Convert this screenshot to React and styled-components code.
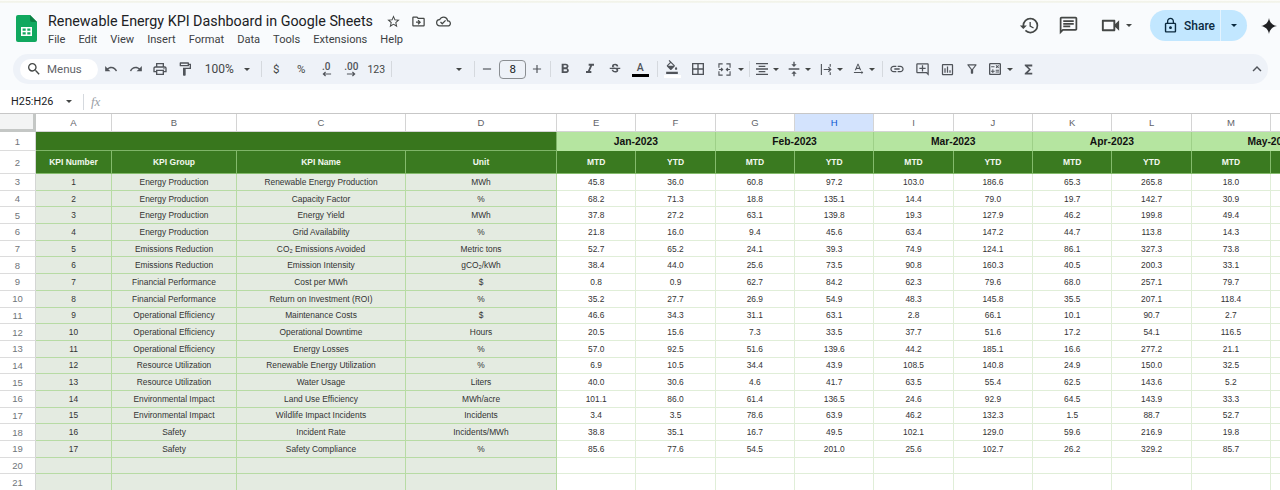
import React from "react";
import styled, { createGlobalStyle } from "styled-components";
import {
  MdStarBorder,
  MdOutlineDriveFileMove,
  MdOutlineCloudDone,
  MdUndo,
  MdRedo,
  MdOutlinePrint,
  MdOutlineFormatPaint,
  MdSearch,
  MdHistory,
  MdOutlineVideocam,
  MdLockOutline,
  MdFormatBold,
  MdFormatItalic,
  MdStrikethroughS,
  MdOutlineFormatColorFill,
  MdBorderAll,
  MdFormatAlignCenter,
  MdVerticalAlignCenter,
  MdLink,
  MdOutlineAddComment,
  MdOutlineInsertChart,
  MdOutlineFilterAlt,
  MdFunctions,
  MdKeyboardArrowUp,
  MdAdd,
  MdRemove,
  MdOutlineCalculate,
  MdOutlineTextRotationNone,
  MdOutlineChat,
} from "react-icons/md";

const GlobalStyle = createGlobalStyle`
  html, body {
    margin: 0;
    padding: 0;
    background: #fff;
    overflow: hidden;
  }
  body {
    width: 1280px;
    height: 490px;
    font-family: "Liberation Sans", Arial, sans-serif;
  }
`;

const Page = styled.div`
  width: 1280px;
  height: 490px;
  overflow: hidden;
  display: flex;
  flex-direction: column;
`;

const TopStrip = styled.div`
  height: 3px;
  background: linear-gradient(#fff 0, #f0f1e6 60%, #f6f8f4 100%);
`;

const Chrome = styled.div`
  background: #f9fbfd;
  height: 87px;
`;

const TitleBar = styled.div`
  height: 51px;
  display: flex;
  align-items: flex-start;
  padding: 0 3px 0 16px;
`;

const LogoWrap = styled.div`
  width: 21px;
  height: 27px;
  margin-top: 12px;
`;

const DocInfo = styled.div`
  margin-left: 11px;
  padding-top: 8px;
`;

const TitleRow = styled.div`
  display: flex;
  align-items: center;
  height: 20px;
`;

const Title = styled.div`
  font-family: Roboto, sans-serif;
  font-size: 14.3px;
  color: #202124;
  width: 324px;
  white-space: nowrap;
`;

const TitleIcons = styled.div`
  display: flex;
  margin-left: 8.5px;
  color: #444746;
`;

const TitleIcon = styled.div`
  width: 25px;
  display: flex;
  justify-content: center;
  align-items: center;
  font-size: 15px;
`;

const MenuRow = styled.div`
  display: flex;
  gap: 13px;
  margin-top: 0;
  font-family: Roboto, sans-serif;
  font-size: 11.1px;
  line-height: 18px;
  color: #3c4043;
`;

const HeaderRight = styled.div`
  margin-left: auto;
  display: flex;
  align-items: center;
  height: 31px;
  margin-top: 7px;
  color: #444746;
`;

const HeaderIcon = styled.div`
  width: 24px;
  display: flex;
  justify-content: center;
  font-size: ${(p) => p.$size || 21}px;
  margin-right: ${(p) => p.$gap || 0}px;
`;

const ShareButton = styled.div`
  width: 97px;
  height: 31px;
  margin-left: 17px;
  display: flex;
  border-radius: 16px;
  background: #c2e7ff;
  color: #0b2a3f;
  overflow: hidden;
`;

const ShareMain = styled.div`
  width: 71px;
  display: flex;
  align-items: center;
  gap: 5px;
  padding-left: 12px;
  box-sizing: border-box;
  border-right: 1px solid #e3f3ff;
  font-family: Roboto, sans-serif;
  font-size: 12px;
  font-weight: 500;
  svg {
    font-size: 17px;
  }
`;

const ShareCaret = styled.div`
  flex: 1;
  display: flex;
  align-items: center;
  justify-content: center;
`;

const GeminiWrap = styled.div`
  width: 16px;
  height: 16px;
  margin-left: 14px;
  color: #202124;
`;

const Caret = styled.span`
  display: block;
  width: 0;
  height: 0;
  border-left: 3.5px solid transparent;
  border-right: 3.5px solid transparent;
  border-top: 3.5px solid ${(p) => p.$color || "#444746"};
`;

const Toolbar = styled.div`
  margin-left: 13px;
  width: 1255px;
  height: 30px;
  box-sizing: border-box;
  padding: 0 1px 0 7px;
  display: flex;
  align-items: center;
  border-radius: 15px;
  background: #eef2f8;
  color: #50545a;
`;

const SearchPill = styled.div`
  width: 78px;
  height: 21px;
  flex: none;
  margin-right: 0.7px;
  box-sizing: border-box;
  padding-left: 6px;
  display: flex;
  align-items: center;
  gap: 5px;
  background: #fff;
  border-radius: 11px;
  font-family: Roboto, sans-serif;
  font-size: 11.5px;
  color: #5f6368;
  svg {
    font-size: 16px;
    color: #444746;
  }
`;

const Slot = styled.div`
  flex: none;
  width: ${(p) => p.$w}px;
  margin-left: ${(p) => p.$l || 0}px;
  height: 30px;
  display: flex;
  flex-direction: column;
  align-items: center;
  justify-content: center;
  font-size: ${(p) => p.$size || 14}px;
`;

const SlotText = styled(Slot)`
  font-family: Roboto, sans-serif;
  font-size: ${(p) => p.$font || 11.5}px;
  color: #444746;
`;

const Divider = styled.div`
  flex: none;
  width: 1px;
  height: 16px;
  background: #d5d9de;
  margin-left: ${(p) => p.$l || 0}px;
  margin-right: ${(p) => p.$r || 0}px;
`;

const Spacer = styled.div`
  flex: none;
  width: ${(p) => p.$w}px;
`;

const FontSizeBox = styled.div`
  flex: none;
  width: 27px;
  height: 19px;
  box-sizing: border-box;
  border: 1px solid #8a8e92;
  border-radius: 4px;
  display: flex;
  align-items: center;
  justify-content: center;
  font-family: Roboto, sans-serif;
  font-size: 11.5px;
  color: #202124;
`;

const ColorLetter = styled.span`
  font-family: Roboto, sans-serif;
  font-size: 10.5px;
  font-weight: 500;
  line-height: 11px;
`;

const ColorBar = styled.span`
  display: block;
  width: 17px;
  height: 3px;
  margin-top: 1px;
  background: ${(p) => p.$color};
`;

const DecimalLabel = styled.span`
  font-family: Roboto, sans-serif;
  font-size: 10px;
  font-weight: 500;
  line-height: 9px;
`;

const FormulaBar = styled.div`
  height: 23px;
  display: flex;
  align-items: center;
  background: #fff;
  border-bottom: 1px solid #c7c7c7;
  color: #444746;
`;

const NameBox = styled.div`
  width: 55px;
  margin-left: 11px;
  font-family: Roboto, sans-serif;
  font-size: 10.8px;
  color: #202124;
`;

const NameCaret = styled.div`
  width: 8px;
`;

const FxLabel = styled.div`
  margin-left: 7px;
  font-family: "Liberation Serif", serif;
  font-style: italic;
  font-size: 13px;
  color: #9aa0a6;
`;

const SheetGrid = styled.div`
  flex: 1;
  display: grid;
  grid-template-columns: 36px 76px 125px 169px 151px repeat(10, 79.35px);
  grid-template-rows: 18px 19px 23px repeat(19, 16.7px);
  overflow: hidden;
  background: #fff;
  font-size: 8.4px;
  color: #333;
`;

const Cell = styled.div`
  box-sizing: border-box;
  display: flex;
  align-items: center;
  justify-content: center;
  white-space: nowrap;
  border-right: 1px solid #d6e8cd;
  border-bottom: 1px solid #d6e8cd;
`;

const Corner = styled(Cell)`
  background: #f3f4f4;
  border-right: 3px solid #c4c7c5;
  border-bottom: 3px solid #c4c7c5;
`;

const ColHead = styled(Cell)`
  background: ${(p) => (p.$selected ? "#d3e3fd" : "#fff")};
  color: ${(p) => (p.$selected ? "#0b57d0" : "#5f6368")};
  font-size: 9.5px;
  border-right: 1px solid #d4d4d4;
  border-bottom: 1px solid #d4d4d4;
`;

const RowHead = styled(Cell)`
  background: #fff;
  color: #70757a;
  font-size: 9.5px;
  border-right: 1px solid #d4d6d4;
  border-bottom: 1px solid #dcdcdc;
`;

const Banner = styled(Cell)`
  grid-column: span 4;
  background: #38761d;
  border-right: 1px solid #7fb568;
  border-bottom: 1px solid #7fb568;
`;

const MonthCell = styled(Cell)`
  grid-column: span 2;
  background: #b5e5a0;
  color: #111;
  font-weight: bold;
  font-size: 10.3px;
  border-right: 1px solid #9ed088;
  border-bottom: none;
`;

const HeadCell = styled(Cell)`
  background: #3a7a20;
  color: #f2f8ee;
  font-weight: bold;
  font-size: 8.5px;
  border-right: 1px solid #84bb6c;
  border-bottom: 1px solid #84bb6c;
`;

const InfoCell = styled(Cell)`
  background: #e4ebe1;
  border-right: 1px solid #b7dba4;
  border-bottom: 1px solid #b7dba4;
`;

const ValueCell = styled(Cell)`
  background: #fff;
  border-right: 1px solid #e0eed8;
  border-bottom: 1px solid #e0eed8;
`;

const menus = ["File", "Edit", "View", "Insert", "Format", "Data", "Tools", "Extensions", "Help"];
const columns = ["A", "B", "C", "D", "E", "F", "G", "H", "I", "J", "K", "L", "M"];
const months = ["Jan-2023", "Feb-2023", "Mar-2023", "Apr-2023", "May-2023"];

const info = [
  ["Energy Production", "Renewable Energy Production", "MWh"],
  ["Energy Production", "Capacity Factor", "%"],
  ["Energy Production", "Energy Yield", "MWh"],
  ["Energy Production", "Grid Availability", "%"],
  ["Emissions Reduction", "CO₂ Emissions Avoided", "Metric tons"],
  ["Emissions Reduction", "Emission Intensity", "gCO₂/kWh"],
  ["Financial Performance", "Cost per MWh", "$"],
  ["Financial Performance", "Return on Investment (ROI)", "%"],
  ["Operational Efficiency", "Maintenance Costs", "$"],
  ["Operational Efficiency", "Operational Downtime", "Hours"],
  ["Operational Efficiency", "Energy Losses", "%"],
  ["Resource Utilization", "Renewable Energy Utilization", "%"],
  ["Resource Utilization", "Water Usage", "Liters"],
  ["Environmental Impact", "Land Use Efficiency", "MWh/acre"],
  ["Environmental Impact", "Wildlife Impact Incidents", "Incidents"],
  ["Safety", "Incident Rate", "Incidents/MWh"],
  ["Safety", "Safety Compliance", "%"],
];

const values = [
  ["45.8", "36.0", "60.8", "97.2", "103.0", "186.6", "65.3", "265.8", "18.0"],
  ["68.2", "71.3", "18.8", "135.1", "14.4", "79.0", "19.7", "142.7", "30.9"],
  ["37.8", "27.2", "63.1", "139.8", "19.3", "127.9", "46.2", "199.8", "49.4"],
  ["21.8", "16.0", "9.4", "45.6", "63.4", "147.2", "44.7", "113.8", "14.3"],
  ["52.7", "65.2", "24.1", "39.3", "74.9", "124.1", "86.1", "327.3", "73.8"],
  ["38.4", "44.0", "25.6", "73.5", "90.8", "160.3", "40.5", "200.3", "33.1"],
  ["0.8", "0.9", "62.7", "84.2", "62.3", "79.6", "68.0", "257.1", "79.7"],
  ["35.2", "27.7", "26.9", "54.9", "48.3", "145.8", "35.5", "207.1", "118.4"],
  ["46.6", "34.3", "31.1", "63.1", "2.8", "66.1", "10.1", "90.7", "2.7"],
  ["20.5", "15.6", "7.3", "33.5", "37.7", "51.6", "17.2", "54.1", "116.5"],
  ["57.0", "92.5", "51.6", "139.6", "44.2", "185.1", "16.6", "277.2", "21.1"],
  ["6.9", "10.5", "34.4", "43.9", "108.5", "140.8", "24.9", "150.0", "32.5"],
  ["40.0", "30.6", "4.6", "41.7", "63.5", "55.4", "62.5", "143.6", "5.2"],
  ["101.1", "86.0", "61.4", "136.5", "24.6", "92.9", "64.5", "143.9", "33.3"],
  ["3.4", "3.5", "78.6", "63.9", "46.2", "132.3", "1.5", "88.7", "52.7"],
  ["38.8", "35.1", "16.7", "49.5", "102.1", "129.0", "59.6", "216.9", "19.8"],
  ["85.6", "77.6", "54.5", "201.0", "25.6", "102.7", "26.2", "329.2", "85.7"],
];

const SheetsLogo = () => (
  <svg width="21" height="27" viewBox="0 0 21 27">
    <path d="M2 0h12l7 7v18a2 2 0 0 1-2 2H2a2 2 0 0 1-2-2V2a2 2 0 0 1 2-2z" fill="#11a85f" />
    <path d="M14 0l7 7h-5a2 2 0 0 1-2-2z" fill="#0b8043" />
    <path d="M5 12h11v9H5z M6.6 13.6v2.1h3.1v-2.1z M11.3 13.6v2.1h3.1v-2.1z M6.6 17.3v2.1h3.1v-2.1z M11.3 17.3v2.1h3.1v-2.1z" fill="#fff" fillRule="evenodd" />
  </svg>
);

const GeminiStar = () => (
  <svg width="16" height="16" viewBox="0 0 16 16">
    <path d="M8 0c.6 4.4 3.6 7.4 8 8-4.4.6-7.4 3.6-8 8-.6-4.4-3.6-7.4-8-8 4.4-.6 7.4-3.6 8-8z" fill="currentColor" />
  </svg>
);

const DecimalArrow = ({ left }) => (
  <svg width="11" height="6" viewBox="0 0 12 6">
    <path d={left ? "M11 3H3M5 .8L2.6 3 5 5.2" : "M1 3h8M7 .8L9.4 3 7 5.2"} fill="none" stroke="currentColor" strokeWidth="1.3" />
  </svg>
);

const MergeIcon = () => (
  <svg width="13" height="13" viewBox="0 0 14 14" fill="none" stroke="currentColor" strokeWidth="1.2">
    <path d="M1 5V1h4M9 1h4v4M1 9v4h4M9 13h4V9" />
    <path d="M1 7h3.5M3.3 5.4L5 7 3.3 8.6M13 7H9.5M10.7 5.4L9 7l1.7 1.6" />
  </svg>
);

const WrapIcon = () => (
  <svg width="13" height="13" viewBox="0 0 14 14" fill="none" stroke="currentColor" strokeWidth="1.2">
    <path d="M1.5 1v12M11 1v3M11 10v3M4 7h7.5M9 4.6L11.6 7 9 9.4" />
  </svg>
);

const App = () => (
  <>
    <GlobalStyle />
    <Page>
      <TopStrip />
      <Chrome>
        <TitleBar>
          <LogoWrap>
            <SheetsLogo />
          </LogoWrap>
          <DocInfo>
            <TitleRow>
              <Title>Renewable Energy KPI Dashboard in Google Sheets</Title>
              <TitleIcons>
                <TitleIcon><MdStarBorder /></TitleIcon>
                <TitleIcon><MdOutlineDriveFileMove /></TitleIcon>
                <TitleIcon><MdOutlineCloudDone /></TitleIcon>
              </TitleIcons>
            </TitleRow>
            <MenuRow>
              {menus.map((item) => (
                <span key={item}>{item}</span>
              ))}
            </MenuRow>
          </DocInfo>
          <HeaderRight>
            <HeaderIcon $gap={15}><MdHistory /></HeaderIcon>
            <HeaderIcon $gap={18}><MdOutlineChat /></HeaderIcon>
            <HeaderIcon $size={23}><MdOutlineVideocam /></HeaderIcon>
            <Slot $w={8} $l={3}><Caret /></Slot>
            <ShareButton>
              <ShareMain>
                <MdLockOutline />
                Share
              </ShareMain>
              <ShareCaret><Caret $color="#0b2a3f" /></ShareCaret>
            </ShareButton>
            <GeminiWrap><GeminiStar /></GeminiWrap>
          </HeaderRight>
        </TitleBar>
        <Toolbar>
          <SearchPill>
            <MdSearch />
            Menus
          </SearchPill>
          <Slot $w={24.67}><MdUndo /></Slot>
          <Slot $w={24.67}><MdRedo /></Slot>
          <Slot $w={24.67} $size={16}><MdOutlinePrint /></Slot>
          <Slot $w={24.67} $size={16}><MdOutlineFormatPaint /></Slot>
          <SlotText $w={44} $font={12}>100%</SlotText>
          <Slot $w={12}><Caret /></Slot>
          <Divider $l={8} $r={1.5} />
          <SlotText $w={25}>$</SlotText>
          <SlotText $w={25}>%</SlotText>
          <Slot $w={25}>
            <DecimalLabel>.0</DecimalLabel>
            <DecimalArrow left />
          </Slot>
          <Slot $w={25}>
            <DecimalLabel>.00</DecimalLabel>
            <DecimalArrow />
          </Slot>
          <SlotText $w={25} $font={10.5}>123</SlotText>
          <Divider $l={2.5} />
          <Spacer $w={60} />
          <Slot $w={14}><Caret /></Slot>
          <Divider $l={8} />
          <Slot $w={24}><MdRemove /></Slot>
          <FontSizeBox>8</FontSizeBox>
          <Slot $w={22}><MdAdd /></Slot>
          <Divider $l={2} $r={1.5} />
          <Slot $w={25} $size={16}><MdFormatBold /></Slot>
          <Slot $w={25} $size={16}><MdFormatItalic /></Slot>
          <Slot $w={25}><MdStrikethroughS /></Slot>
          <Slot $w={25}>
            <ColorLetter>A</ColorLetter>
            <ColorBar $color="#000" />
          </Slot>
          <Divider $l={4} $r={1.5} />
          <Slot $w={26}>
            <MdOutlineFormatColorFill />
            <ColorBar $color="#fff" />
          </Slot>
          <Slot $w={26} $size={16}><MdBorderAll /></Slot>
          <Slot $w={26}><MergeIcon /></Slot>
          <Slot $w={8}><Caret /></Slot>
          <Divider $l={4} $r={2} />
          <Slot $w={20} $size={16}><MdFormatAlignCenter /></Slot>
          <Slot $w={8}><Caret /></Slot>
          <Slot $w={20} $l={4} $size={16}><MdVerticalAlignCenter /></Slot>
          <Slot $w={8}><Caret /></Slot>
          <Slot $w={20} $l={4}><WrapIcon /></Slot>
          <Slot $w={8}><Caret /></Slot>
          <Slot $w={20} $l={4}><MdOutlineTextRotationNone /></Slot>
          <Slot $w={8}><Caret /></Slot>
          <Divider $l={6} $r={1.5} />
          <Slot $w={25} $size={16}><MdLink /></Slot>
          <Slot $w={25} $size={15}><MdOutlineAddComment /></Slot>
          <Slot $w={25} $size={15}><MdOutlineInsertChart /></Slot>
          <Slot $w={25}><MdOutlineFilterAlt /></Slot>
          <Slot $w={21} $size={16}><MdOutlineCalculate /></Slot>
          <Slot $w={8}><Caret /></Slot>
          <Slot $w={24} $l={2.5} $size={15}><MdFunctions /></Slot>
          <Spacer $w={207} />
          <Slot $w={20} $size={18}><MdKeyboardArrowUp /></Slot>
        </Toolbar>
      </Chrome>
      <FormulaBar>
        <NameBox>H25:H26</NameBox>
        <NameCaret><Caret /></NameCaret>
        <Divider $l={9} />
        <FxLabel>fx</FxLabel>
      </FormulaBar>
      <SheetGrid>
        <Corner />
        {columns.map((col) => (
          <ColHead key={col} $selected={col === "H"}>{col}</ColHead>
        ))}
        <ColHead />

        <RowHead>1</RowHead>
        <Banner />
        {months.map((month) => (
          <MonthCell key={month}>{month}</MonthCell>
        ))}

        <RowHead>2</RowHead>
        <HeadCell>KPI Number</HeadCell>
        <HeadCell>KPI Group</HeadCell>
        <HeadCell>KPI Name</HeadCell>
        <HeadCell>Unit</HeadCell>
        {columns.slice(4).map((col, i) => (
          <HeadCell key={col}>{i % 2 === 0 ? "MTD" : "YTD"}</HeadCell>
        ))}
        <HeadCell />

        {info.map((row, i) => (
          <React.Fragment key={row[1]}>
            <RowHead>{i + 3}</RowHead>
            <InfoCell>{i + 1}</InfoCell>
            <InfoCell>{row[0]}</InfoCell>
            <InfoCell>{row[1]}</InfoCell>
            <InfoCell>{row[2]}</InfoCell>
            {values[i].map((value, j) => (
              <ValueCell key={j}>{value}</ValueCell>
            ))}
            <ValueCell />
          </React.Fragment>
        ))}

        {[20, 21].map((num) => (
          <React.Fragment key={num}>
            <RowHead>{num}</RowHead>
            <InfoCell />
            <InfoCell />
            <InfoCell />
            <InfoCell />
            {columns.slice(4).map((col) => (
              <ValueCell key={col} />
            ))}
            <ValueCell />
          </React.Fragment>
        ))}
      </SheetGrid>
    </Page>
  </>
);

export default App;
